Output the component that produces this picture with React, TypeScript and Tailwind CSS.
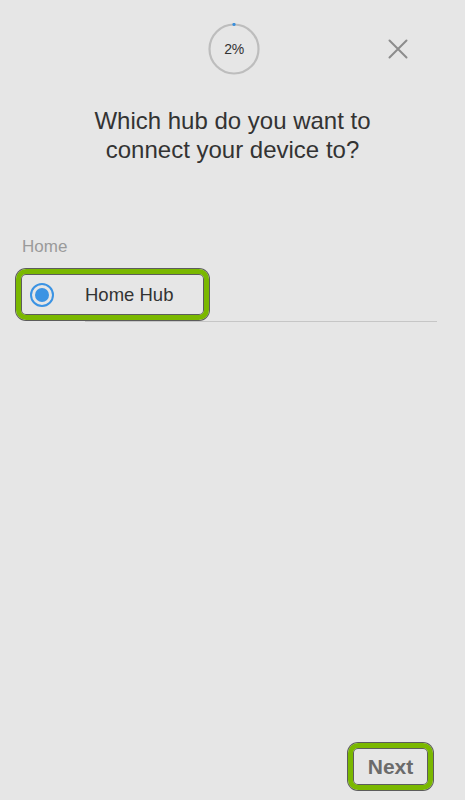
import React from "react";

function ProgressRing({ value }: { value: number }) {
  return (
    <div className="relative w-[52px] h-[52px]">
      <svg width="52" height="52" viewBox="0 0 52 52" className="absolute inset-0">
        <circle cx="26" cy="26" r="24.5" fill="none" stroke="#bdbdbd" strokeWidth="2.2" />
        <circle cx="26" cy="1.5" r="1.6" fill="#3a8fdc" />
      </svg>
      <div className="absolute inset-0 flex items-center justify-center text-[14px] text-[#333] tracking-tight">
        {value}%
      </div>
    </div>
  );
}

function CloseIcon() {
  return (
    <svg width="20" height="20" viewBox="0 0 20 20">
      <path d="M1.5 1.5 L18.5 18.5 M18.5 1.5 L1.5 18.5" stroke="#8c8c8c" strokeWidth="2" strokeLinecap="round" />
    </svg>
  );
}

export default function App() {
  return (
    <div
      className="w-[465px] h-[800px] bg-[#e6e6e6] flex flex-col"
      style={{ fontFamily: '"Liberation Sans", Arial, sans-serif' }}
    >
      {/* top bar */}
      <div className="relative h-[98px] flex items-center justify-center">
        <div className="ml-[3px]">
          <ProgressRing value={2} />
        </div>
        <div className="absolute right-[57px] top-[39px]">
          <CloseIcon />
        </div>
      </div>

      {/* question */}
      <h1 className="text-center text-[24px] leading-[29px] text-[#333] font-normal pt-[8px]">
        Which hub do you want to
        <br />
        connect your device to?
      </h1>

      {/* hub list */}
      <div className="mt-[73px] pl-[22px] text-[17px] text-[#9a9a9a] leading-[20px]">Home</div>
      <div className="relative mt-[12px] h-[54px]">
        <div className="absolute left-[85px] right-[28px] bottom-[1px] h-px bg-[#c6c6c6]" />
        <div className="relative ml-[16px] w-[193px] h-[51px] rounded-[10px] border-[5px] border-[#7ab800] shadow-[0_0_0_1px_#5c5c5c,inset_0_0_0_1px_#5c5c5c] flex items-center">
          <div className="ml-[9px] w-[24px] h-[24px] rounded-full border-2 border-[#3b93e3] flex items-center justify-center">
            <div className="w-[14px] h-[14px] rounded-full bg-[#3b93e3]" />
          </div>
          <span className="ml-[31px] text-[18.5px] text-[#333]">Home Hub</span>
        </div>
      </div>

      <div className="flex-1" />

      {/* footer */}
      <div className="flex justify-end pr-[32px] pb-[10px]">
        <div className="w-[85px] h-[47px] rounded-[10px] border-[5px] border-[#7ab800] shadow-[0_0_0_1px_#5c5c5c,inset_0_0_0_1px_#5c5c5c] flex items-center justify-center">
          <span className="text-[21px] font-bold text-[#6b6b6b]">Next</span>
        </div>
      </div>
    </div>
  );
}
